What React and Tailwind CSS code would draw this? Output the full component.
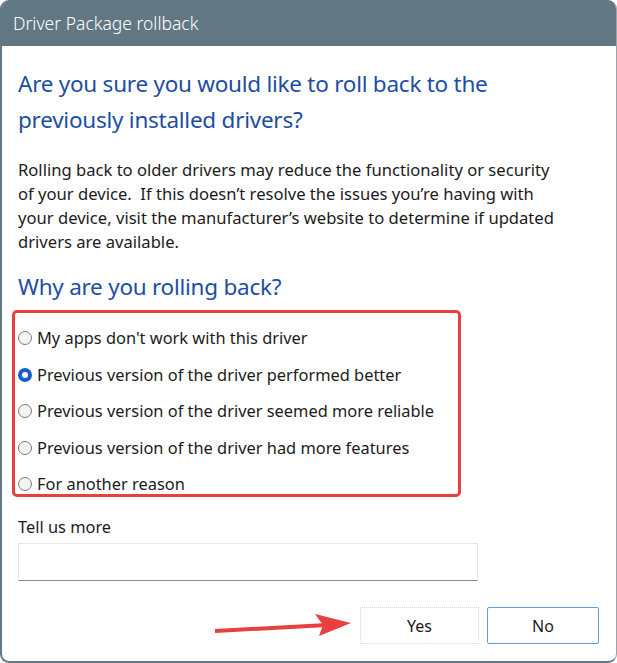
import React, { useState } from "react";

const REASONS = [
  "My apps don't work with this driver",
  "Previous version of the driver performed better",
  "Previous version of the driver seemed more reliable",
  "Previous version of the driver had more features",
  "For another reason",
];

export default function App() {
  const [picked, setPicked] = useState(1);

  return (
    <div
      className="w-[617px] h-[663px] bg-white"
      style={{ fontFamily: '"Noto Sans", "Open Sans", sans-serif' }}
    >
      <div className="h-full flex flex-col rounded-[9px] overflow-hidden border-l-2 border-b-2 border-r border-[#627784] border-r-[#9aa3aa] bg-white">
        {/* ================= TITLE BAR ================= */}
        <div className="h-[46px] shrink-0 bg-[#627784] flex items-center px-[11px]">
          <span className="text-white text-[17.5px] font-light">Driver Package rollback</span>
        </div>

        {/* ================= BODY ================= */}
        <div className="flex-1 flex flex-col pl-[16px] pr-[16px]">
          <h1 className="mt-[20px] text-[22.5px] leading-[36px] text-[#1c4ea3] tracking-[-0.25px] font-normal">
            Are you sure you would like to roll back to the
            <br />
            previously installed drivers?
          </h1>

          <p className="mt-[20px] text-[16.6px] leading-[24px] text-[#1b1b1b]">
            Rolling back to older drivers may reduce the functionality or security
            <br />
            of your device.&nbsp; If this doesn’t resolve the issues you’re having with
            <br />
            your device, visit the manufacturer’s website to determine if updated
            <br />
            drivers are available.
          </p>

          <h2 className="mt-[15px] text-[22.5px] leading-[36px] text-[#1c4ea3] tracking-[-0.25px] font-normal">
            Why are you rolling back?
          </h2>

          {/* REASONS */}
          <div className="mt-[5px] -ml-[6px] w-[449px] border-[3px] border-[#e8403f] rounded-[5px] flex flex-col gap-[16.5px] pt-[15px] pl-[3px]">
            {REASONS.map((r, i) => (
              <label
                key={r}
                className="h-[20px] flex items-center gap-[5px] cursor-pointer"
                onClick={() => setPicked(i)}
              >
                <Radio on={picked === i} />
                <span className="text-[16.4px] leading-[20px] text-[#1b1b1b]">{r}</span>
              </label>
            ))}
          </div>

          <div className="mt-[19px] text-[16.4px] text-[#1b1b1b] leading-[22px]">
            Tell us more
          </div>
          <input
            className="mt-[5px] w-[460px] h-[38px] border border-[#e6e6e6] border-b-[#8a8a8a] bg-white outline-none px-2 text-[15px]"
          />

          {/* ACTIONS */}
          <div className="relative mt-[26px] flex justify-end gap-[8px] pr-[1px]">
            <svg className="absolute left-[197px] top-[5px]" width="140" height="24" viewBox="0 0 140 24">
              <line x1="0" y1="19" x2="112" y2="13" stroke="#e8403f" strokeWidth="4" />
              <polygon points="136,11 100,2 108,13 104,24" fill="#e8403f" />
            </svg>
            <button className="w-[119px] h-[37px] bg-white border border-[#d4d4d4] border-dotted text-[16px] text-[#1b1b1b]">
              Yes
            </button>
            <button className="w-[112px] h-[37px] bg-white border border-[#5a9fe0] rounded-[2px] text-[16px] text-[#1b1b1b]">
              No
            </button>
          </div>
        </div>
      </div>
    </div>
  );
}

function Radio({ on }) {
  if (on) {
    return (
      <span className="w-[14px] h-[14px] rounded-full bg-[#1560c8] flex items-center justify-center shrink-0">
        <span className="w-[6px] h-[6px] rounded-full bg-white" />
      </span>
    );
  }
  return (
    <span className="w-[14px] h-[14px] rounded-full border border-[#7a7a7a] bg-[#f4f4f4] shrink-0" />
  );
}
